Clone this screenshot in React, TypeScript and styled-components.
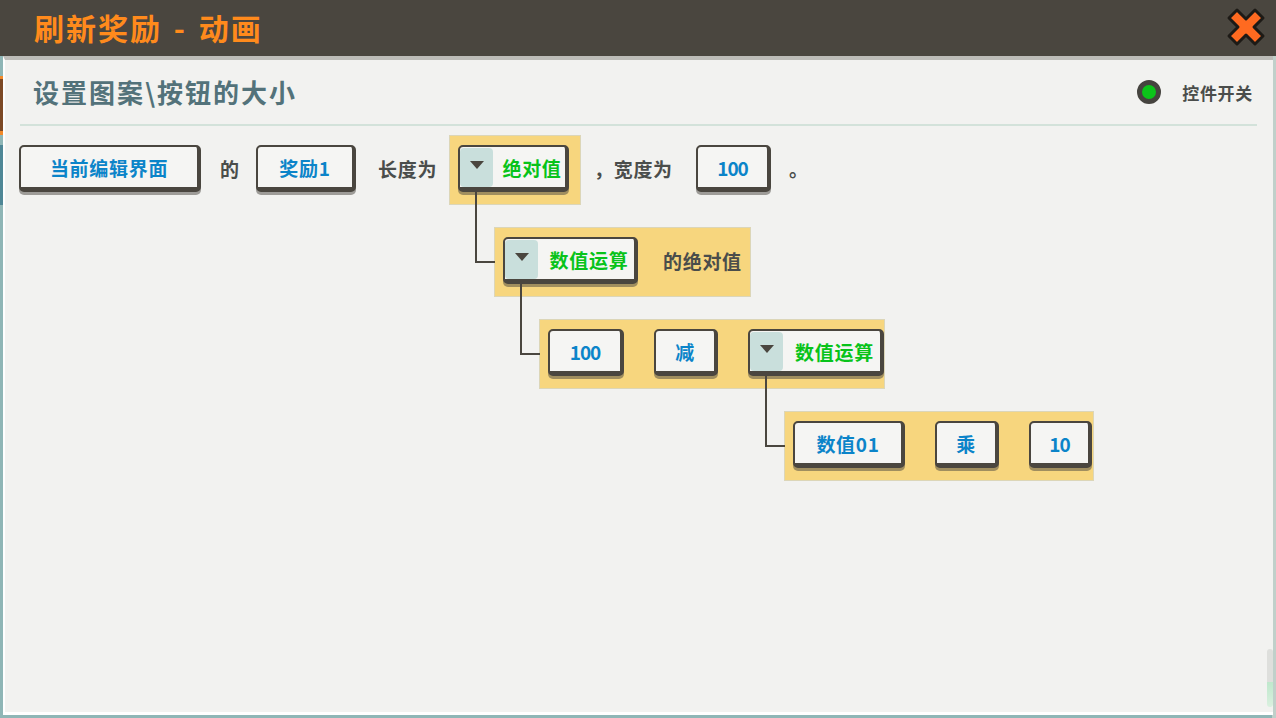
import React from "react";
import styled, { createGlobalStyle } from "styled-components";

const Global = createGlobalStyle`
  html, body { margin: 0; padding: 0; width: 1276px; height: 718px; overflow: hidden; }
  body { font-family: "Noto Sans CJK SC", "Noto Sans", sans-serif; }
`;

const Page = styled.div`
  width: 1276px;
  height: 718px;
  display: flex;
  flex-direction: column;
  overflow: hidden;
  background:
    linear-gradient(
        to bottom,
        #8fb6b6 0 76px,
        #f28a2a 76px 79px,
        #7d4a26 79px 131px,
        #f28a2a 131px 135px,
        #8fb6b6 135px 145px,
        #4f8796 145px 205px,
        #8fb6b6 205px
      )
      left top / 3px 100% no-repeat,
    linear-gradient(#c0d0ca, #c0d0ca) right top / 4px 100% no-repeat,
    #8fb6b6;
`;

const Header = styled.header`
  height: 56px;
  flex: none;
  background: #4a463f;
  display: flex;
  align-items: center;
  justify-content: space-between;
  padding: 0 10px 0 34px;
`;

const Title = styled.h1`
  margin: 0 0 3px;
  font-size: 30px;
  line-height: 1;
  font-weight: 700;
  color: #ff8a1c;
  letter-spacing: 2px;
  word-spacing: 3px;
`;

const Panel = styled.main`
  position: relative;
  flex: none;
  width: 1270px;
  height: 659px;
  margin-left: 3px;
  box-sizing: border-box;
  background: #f2f2f0;
  border-left: 2px solid #ffffff;
  border-bottom: 3px solid #ffffff;
  border-top: 4px solid #bdbcb8;
  padding: 0 15px;
`;

const SectionHead = styled.div`
  height: 64px;
  display: flex;
  align-items: center;
  justify-content: space-between;
  border-bottom: 2px solid #d3e2da;
  padding: 0 4px 0 14px;
  margin-right: 1px;
`;

const SectionTitle = styled.h2`
  margin: 0 0 0 -1px;
  font-size: 26px;
  line-height: 1;
  font-weight: 700;
  color: #53727a;
  letter-spacing: 2px;
`;

const Switch = styled.div`
  display: flex;
  align-items: center;
  gap: 21px;
  font-size: 17px;
  font-weight: 700;
  letter-spacing: 0.7px;
  color: #4a4d4b;
`;

const Lamp = styled.span`
  width: 14px;
  height: 14px;
  border: 5px solid #46443f;
  border-radius: 50%;
  background: #0cc41a;
`;

const Tree = styled.div`
  display: flex;
  flex-direction: column;
  gap: 22px;
  padding-top: 9px;
  margin-left: -1px;
`;

const Row = styled.div<{ $indent?: number }>`
  display: flex;
  align-items: center;
  height: 70px;
  margin-left: ${(p) => p.$indent ?? 0}px;
`;

const Block = styled.div<{ $width: number; $linked?: boolean }>`
  position: relative;
  box-sizing: border-box;
  width: ${(p) => p.$width}px;
  height: 70px;
  flex: none;
  display: flex;
  align-items: center;
  padding-left: 8px;
  background: #f7d67e;
  border: 1px solid #dcd6b8;
  ${(p) =>
    p.$linked &&
    `&::before {
      content: "";
      position: absolute;
      left: -20px;
      top: -37px;
      width: 18px;
      height: 70px;
      border-left: 2px solid #4a463f;
      border-bottom: 2px solid #4a463f;
    }`}
`;

const Chip = styled.div<{ $width: number; $gap?: number; $num?: boolean }>`
  box-sizing: border-box;
  width: ${(p) => p.$width}px;
  height: 47px;
  flex: none;
  margin-right: ${(p) => p.$gap ?? 0}px;
  margin-bottom: 3px;
  display: flex;
  align-items: center;
  justify-content: center;
  background: #f5f5f3;
  border: 2px solid #4a463f;
  border-right-width: 4px;
  border-bottom-width: 5px;
  border-radius: 5px;
  box-shadow: 0 3px 0 rgba(74, 70, 63, 0.5);
  font-size: 19px;
  font-weight: 700;
  line-height: 1;
  letter-spacing: ${(p) => (p.$num ? "-1px" : "0.7px")};
  color: #0b84c9;
`;

const DropChip = styled(Chip)`
  justify-content: flex-start;
  padding: 0;
  color: #08c31a;
`;

const Arrow = styled.span`
  box-sizing: border-box;
  flex: none;
  align-self: flex-start;
  width: 33px;
  height: 39px;
  margin-top: 1px;
  border-radius: 4px;
  background: #c9dfdc;
  display: flex;
  justify-content: center;
  padding-top: 13px;
  &::after {
    content: "";
    width: 0;
    height: 0;
    border-left: 7px solid transparent;
    border-right: 7px solid transparent;
    border-top: 8px solid #4a463f;
  }
`;

const DropText = styled.span`
  flex: 1;
  padding-left: 6px;
  text-align: center;
`;

const Label = styled.span<{ $width: number; $left?: number; $right?: number }>`
  flex: none;
  width: ${(p) => p.$width}px;
  margin: 0 ${(p) => p.$right ?? 0}px 3px ${(p) => p.$left ?? 0}px;
  white-space: nowrap;
  font-size: 19px;
  font-weight: 700;
  line-height: 1;
  letter-spacing: 0.7px;
  color: #4a4d4b;
`;

const CloseIcon = styled.svg`
  width: 40px;
  height: 40px;
  flex: none;
  margin-bottom: 2px;
`;

const Scroll = styled.div`
  position: absolute;
  right: 0;
  bottom: 5px;
  width: 6px;
  height: 58px;
  border-radius: 3px;
  background: linear-gradient(
    to bottom,
    #dedfdc 0 33px,
    #bfe8cc 33px,
    #daf0df 100%
  );
`;

const Drop = ({
  width,
  gap,
  children,
}: {
  width: number;
  gap?: number;
  children: React.ReactNode;
}) => (
  <DropChip $width={width} $gap={gap}>
    <Arrow />
    <DropText>{children}</DropText>
  </DropChip>
);

export default function App() {
  return (
    <Page>
      <Global />
      <Header>
        <Title>刷新奖励 - 动画</Title>
        <CloseIcon viewBox="0 0 40 40">
          <path
            d="M11 3 L20 12 L29 3 L37 11 L28 20 L37 29 L29 37 L20 28 L11 37 L3 29 L12 20 L3 11 Z"
            fill="#ff6a20"
            stroke="#1d1a16"
            strokeWidth="3"
            strokeLinejoin="round"
          />
        </CloseIcon>
      </Header>
      <Panel>
        <SectionHead>
          <SectionTitle>设置图案\按钮的大小</SectionTitle>
          <Switch>
            <Lamp />
            控件开关
          </Switch>
        </SectionHead>
        <Tree>
          <Row>
            <Chip $width={182}>当前编辑界面</Chip>
            <Label $width={20} $left={19} $right={16}>的</Label>
            <Chip $width={100}>奖励1</Chip>
            <Label $width={59} $left={22} $right={12}>长度为</Label>
            <Block $width={132}>
              <Drop width={111}>绝对值</Drop>
            </Block>
            <Label $width={78} $left={13} $right={24}>，宽度为</Label>
            <Chip $width={75} $num>100</Chip>
            <Label $width={20} $left={18}>。</Label>
          </Row>
          <Row $indent={475}>
            <Block $width={257} $linked>
              <Drop width={135} gap={25}>数值运算</Drop>
              <Label $width={80}>的绝对值</Label>
            </Block>
          </Row>
          <Row $indent={520}>
            <Block $width={346} $linked>
              <Chip $width={76} $gap={30} $num>100</Chip>
              <Chip $width={64} $gap={30}>减</Chip>
              <Drop width={136}>数值运算</Drop>
            </Block>
          </Row>
          <Row $indent={765}>
            <Block $width={310} $linked>
              <Chip $width={112} $gap={30}>数值01</Chip>
              <Chip $width={64} $gap={30}>乘</Chip>
              <Chip $width={63} $num>10</Chip>
            </Block>
          </Row>
        </Tree>
        <Scroll />
      </Panel>
    </Page>
  );
}
